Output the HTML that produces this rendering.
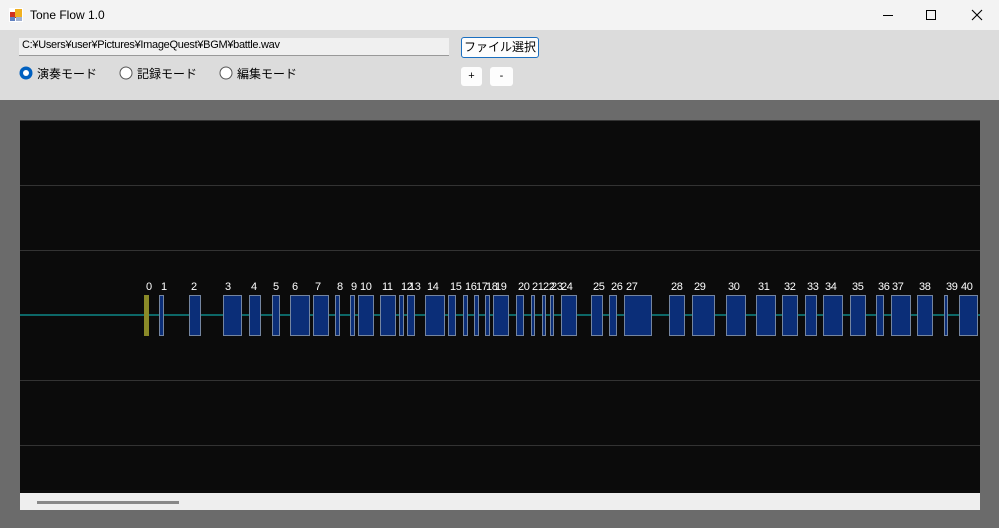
<!DOCTYPE html>
<html><head><meta charset="utf-8"><style>
body{margin:0;width:999px;height:528px;overflow:hidden;background:#6b6b6b;font-family:"Liberation Sans","Noto Sans CJK JP",sans-serif;position:relative}
.title{position:absolute;left:0;top:0;width:999px;height:30px;background:#f3f3f3}
.tb{position:absolute;left:0;top:30px;width:999px;height:70px;background:#dcdcdc}
.abs{position:absolute}
.t{font-size:12px;color:#000}
</style></head><body>
<div class="title">
 <svg class="abs" style="left:9px;top:8px" width="14" height="14"><rect x="0" y="0" width="14" height="14" fill="#fff"/><rect x="1" y="4" width="6" height="6" fill="#d03020"/><rect x="6" y="1" width="7" height="8" fill="#f0b020"/><rect x="1" y="9" width="5" height="4" fill="#6080c0"/><rect x="7" y="9" width="6" height="4" fill="#a0b0d0"/></svg>
 <div class="abs t" style="left:30px;top:8px">Tone Flow 1.0</div>
 <svg class="abs" style="left:880px;top:8px" width="110" height="14"><line x1="3" y1="7.5" x2="13" y2="7.5" stroke="#000"/><rect x="46.5" y="2.5" width="9" height="9" fill="none" stroke="#000"/><path d="M92 2 L102 12 M102 2 L92 12" stroke="#000" stroke-width="1.1"/></svg>
</div>
<div class="tb">
 <div class="abs" style="left:19px;top:8px;width:430px;height:17px;background:#f0f0f0;border-bottom:1px solid #999"></div>
 <div class="abs" style="left:22px;top:9px;font-size:11px;letter-spacing:-0.3px">C:¥Users¥user¥Pictures¥ImageQuest¥BGM¥battle.wav</div>
 <div class="abs" style="left:461px;top:7px;width:76px;height:19px;background:#fdfdfd;border:1px solid #1a6fc0;border-radius:3px;font-size:12px;text-align:center;line-height:19px">ファイル選択</div>
 <svg class="abs" style="left:19px;top:36px" width="14" height="14"><circle cx="7" cy="7" r="6.5" fill="#0060c0"/><circle cx="7" cy="7" r="3" fill="#fff"/></svg>
 <div class="abs t" style="left:37px;top:35px">演奏モード</div>
 <svg class="abs" style="left:119px;top:36px" width="14" height="14"><circle cx="7" cy="7" r="6" fill="#fff" stroke="#555"/></svg>
 <div class="abs t" style="left:137px;top:35px">記録モード</div>
 <svg class="abs" style="left:219px;top:36px" width="14" height="14"><circle cx="7" cy="7" r="6" fill="#fff" stroke="#555"/></svg>
 <div class="abs t" style="left:237px;top:35px">編集モード</div>
 <div class="abs" style="left:461px;top:37px;width:21px;height:19px;background:#fdfdfd;border-radius:3px;font-size:11px;text-align:center;line-height:19px">+</div>
 <div class="abs" style="left:490px;top:37px;width:23px;height:19px;background:#fdfdfd;border-radius:3px;font-size:11px;text-align:center;line-height:19px">-</div>
</div>
<svg class="abs" style="left:20px;top:120px" width="960" height="390" font-family="Liberation Sans, sans-serif" font-size="11" letter-spacing="-0.4" fill="#fff">
<defs>
<g id="blk">
<rect x="139.5" y="175.5" width="4" height="40"/><rect x="169.5" y="175.5" width="11" height="40"/><rect x="203.5" y="175.5" width="18" height="40"/><rect x="229.5" y="175.5" width="11" height="40"/><rect x="252.5" y="175.5" width="7" height="40"/><rect x="270.5" y="175.5" width="19" height="40"/><rect x="293.5" y="175.5" width="15" height="40"/><rect x="315.5" y="175.5" width="4" height="40"/><rect x="330.5" y="175.5" width="4" height="40"/><rect x="338.5" y="175.5" width="15" height="40"/><rect x="360.5" y="175.5" width="15" height="40"/><rect x="379.5" y="175.5" width="4" height="40"/><rect x="387.5" y="175.5" width="7" height="40"/><rect x="405.5" y="175.5" width="19" height="40"/><rect x="428.5" y="175.5" width="7" height="40"/><rect x="443.5" y="175.5" width="4" height="40"/><rect x="454.5" y="175.5" width="4" height="40"/><rect x="465.5" y="175.5" width="4" height="40"/><rect x="473.5" y="175.5" width="15" height="40"/><rect x="496.5" y="175.5" width="7" height="40"/><rect x="511.5" y="175.5" width="3" height="40"/><rect x="522.5" y="175.5" width="3" height="40"/><rect x="530.5" y="175.5" width="3" height="40"/><rect x="541.5" y="175.5" width="15" height="40"/><rect x="571.5" y="175.5" width="11" height="40"/><rect x="589.5" y="175.5" width="7" height="40"/><rect x="604.5" y="175.5" width="27" height="40"/><rect x="649.5" y="175.5" width="15" height="40"/><rect x="672.5" y="175.5" width="22" height="40"/><rect x="706.5" y="175.5" width="19" height="40"/><rect x="736.5" y="175.5" width="19" height="40"/><rect x="762.5" y="175.5" width="15" height="40"/><rect x="785.5" y="175.5" width="11" height="40"/><rect x="803.5" y="175.5" width="19" height="40"/><rect x="830.5" y="175.5" width="15" height="40"/><rect x="856.5" y="175.5" width="7" height="40"/><rect x="871.5" y="175.5" width="19" height="40"/><rect x="897.5" y="175.5" width="15" height="40"/><rect x="924.5" y="175.5" width="3" height="40"/><rect x="939.5" y="175.5" width="18" height="40"/>
</g>
<clipPath id="cp"><use href="#blk"/></clipPath>
</defs>
<rect x="0" y="0" width="960" height="373" fill="#0b0b0b"/>
<rect x="0" y="0" width="960" height="1" fill="#333"/>
<g fill="#333"><rect y="65" width="960" height="1"/><rect y="130" width="960" height="1"/><rect y="260" width="960" height="1"/><rect y="325" width="960" height="1"/></g>
<rect x="0" y="194" width="960" height="2" fill="#0d6868"/>
<use href="#blk" fill="#0b2e78" stroke="#7485a0" stroke-width="1"/>
<rect x="0" y="194" width="960" height="2" fill="#1a6ab8" clip-path="url(#cp)"/>
<rect x="124" y="175" width="5" height="41" fill="#8a8a28"/>
<g>
<text x="126" y="170">0</text><text x="141" y="170">1</text><text x="171" y="170">2</text><text x="205" y="170">3</text><text x="231" y="170">4</text><text x="253" y="170">5</text><text x="272" y="170">6</text><text x="295" y="170">7</text><text x="317" y="170">8</text><text x="331" y="170">9</text><text x="340" y="170">10</text><text x="362" y="170">11</text><text x="381" y="170">12</text><text x="389" y="170">13</text><text x="407" y="170">14</text><text x="430" y="170">15</text><text x="445" y="170">16</text><text x="456" y="170">17</text><text x="466" y="170">18</text><text x="475" y="170">19</text><text x="498" y="170">20</text><text x="512" y="170">21</text><text x="523" y="170">22</text><text x="531" y="170">23</text><text x="541" y="170">24</text><text x="573" y="170">25</text><text x="591" y="170">26</text><text x="606" y="170">27</text><text x="651" y="170">28</text><text x="674" y="170">29</text><text x="708" y="170">30</text><text x="738" y="170">31</text><text x="764" y="170">32</text><text x="787" y="170">33</text><text x="805" y="170">34</text><text x="832" y="170">35</text><text x="858" y="170">36</text><text x="872" y="170">37</text><text x="899" y="170">38</text><text x="926" y="170">39</text><text x="941" y="170">40</text>
</g>
<rect x="0" y="373" width="960" height="17" fill="#eeeeee"/>
<rect x="17" y="381" width="142" height="3" fill="#888"/>
</svg>
</body></html>
